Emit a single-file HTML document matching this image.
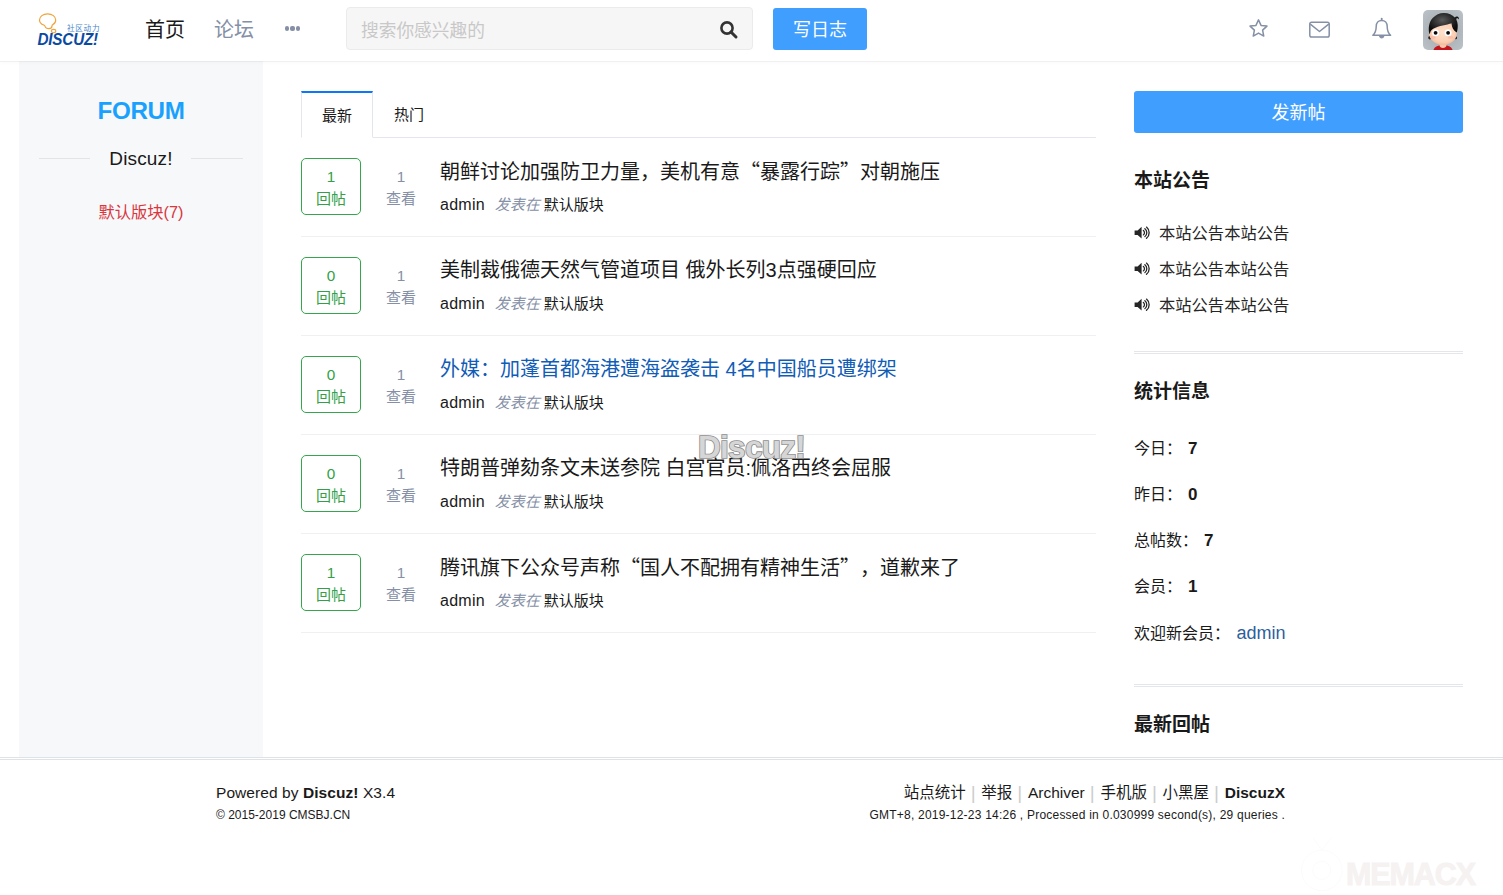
<!DOCTYPE html>
<html lang="zh-CN">
<head>
<meta charset="utf-8">
<title>Discuz! Forum</title>
<style>
*{box-sizing:border-box;margin:0;padding:0}
html,body{width:1503px;height:895px;overflow:hidden;background:#fff}
body{text-spacing-trim:space-all;font-family:"Liberation Sans","Noto Sans CJK SC",sans-serif;color:#1a1a1a;position:relative;font-size:15px}
a{color:inherit;text-decoration:none}
ul{list-style:none}
.abs{position:absolute}
/* header */
#hd{position:absolute;left:0;top:0;width:1503px;height:62px;z-index:2;background:linear-gradient(#fff,#fff) 0 0/100% 61px no-repeat;border-bottom:1px solid rgba(0,0,0,.06);box-shadow:0 1px 4px rgba(0,0,0,.025)}
#logo{position:absolute;left:36px;top:10px;width:68px;height:40px}
.nav{position:absolute;top:0;height:60px;line-height:60px;font-size:20px;white-space:nowrap}
#n1{left:145px;color:#1a1a1a}
#n2{left:214px;color:#8590a6}
#n3{left:284px;top:26px;width:17px;height:6px}
#n3 i{position:absolute;top:0;width:4.6px;height:4.6px;border-radius:2px;background:#8590a6}
#sch{position:absolute;left:346px;top:7px;width:407px;height:43px;background:#f6f6f6;border:1px solid #ebebeb;border-radius:4px}
#sch span{position:absolute;left:14px;top:3px;line-height:40px;font-size:17.7px;color:#c8c8c8;white-space:nowrap}
#sch svg{position:absolute;left:372px;top:12px}
#wbtn{position:absolute;left:773px;top:8px;width:94px;height:42px;background:#409eff;border-radius:3px;color:#fff;font-size:18px;line-height:45px;text-align:center}
.ico{position:absolute}
#ava{position:absolute;left:1423px;top:10px;width:40px;height:40px;border-radius:5px;overflow:hidden}
/* left */
#lf{position:absolute;left:19px;top:61px;width:244px;height:696px;background:#f7f8fa}
#lf h2{position:absolute;left:0;top:34px;width:244px;text-align:center;font-size:24.2px;line-height:32px;color:#19a1fd;font-weight:bold;letter-spacing:-.3px}
#lf .dz{position:absolute;left:0;top:86px;width:244px;text-align:center;letter-spacing:.15px;font-size:19px;line-height:24px;color:#1a1a1a}
#lf .ln{position:absolute;top:97px;height:1px;width:51px;background:#e3e4e6}
#lf .fm{position:absolute;left:0;top:139px;width:244px;text-align:center;font-size:16.3px;line-height:24px;color:#d9363e}
/* main */
#tabs{position:absolute;left:301px;top:91px;width:795px;height:47px;border-bottom:1px solid #e3e6ee}
#t1{position:absolute;left:0;top:0;width:72px;height:47px;border:1px solid #e3e6ee;border-top:2px solid #0d78f7;border-bottom:1px solid #fff;background:#fff;text-align:center;font-size:15px;line-height:46px;color:#1a1a1a}
#t2{position:absolute;left:72px;top:0;width:72px;height:46px;text-align:center;font-size:15px;line-height:48px;color:#1a1a1a}
.it{position:absolute;left:301px;width:795px;height:99px;border-bottom:1px solid #eef0f3}
.rb{position:absolute;left:0;top:20px;width:60px;height:57px;border:1px solid #35a64d;border-radius:5px;color:#339f48;text-align:center;font-size:15px}
.rb b,.vb b{display:block;font-weight:normal;line-height:18px;margin-top:9px;font-size:15.3px}
.rb s,.vb s{display:block;text-decoration:none;line-height:22px;margin-top:2px}
.vb{position:absolute;left:70px;top:20px;width:60px;height:57px;border:1px solid transparent;color:#8590a6;text-align:center;font-size:15px}
.tt{position:absolute;left:139px;top:18px;font-size:20px;line-height:30px;color:#1a1a1a;white-space:nowrap}
q{quotes:none;font-family:"Noto Sans CJK SC",sans-serif}q:before,q:after{content:""}
.tt.bl{color:#105cb6}
.mt{position:absolute;left:139px;top:55px;font-size:15px;line-height:24px;color:#1a1a1a;white-space:nowrap}
.mt .a{font-size:16px;letter-spacing:.25px}
.mt i{font-style:italic;color:#8590a6;margin:0 4px 0 10px}
/* right */
#pbtn{position:absolute;left:1134px;top:91px;width:329px;height:42px;background:#409eff;border-radius:3px;color:#fff;font-size:18px;line-height:44px;text-align:center}
.h3{position:absolute;left:1134px;font-size:19px;line-height:28px;font-weight:bold;color:#1a1a1a;white-space:nowrap}
.an{position:absolute;left:1134px;font-size:16.3px;line-height:24px;color:#262626;white-space:nowrap}
.an svg{position:absolute;left:-.3px;top:4.6px}
.an span{margin-left:25px}
.dl{position:absolute;left:1134px;width:329px;height:3px;border-top:1px solid #e3e6eb;border-bottom:1px solid #e3e6eb}
.st{position:absolute;left:1134px;font-size:16px;line-height:24px;color:#1a1a1a;white-space:nowrap}
.st b{font-size:17px;margin-left:6px}
.st a{font-size:18px;color:#2d5f9e;margin-left:6.5px}
/* footer */
#ft{position:absolute;left:0;top:757px;width:1503px;height:138px;background:#fff;border-top:3px double #dfe2e7}
#ft .l1{position:absolute;left:216px;top:22px;letter-spacing:.07px;font-size:15.5px;line-height:22px;color:#1a1a1a;white-space:nowrap}
#ft .l2{position:absolute;left:216px;top:47px;font-size:12px;line-height:16px;color:#1a1a1a;white-space:nowrap}
#ft .r1{position:absolute;right:218px;top:22px;font-size:15.5px;line-height:22px;color:#1a1a1a;white-space:nowrap}
#ft .r1 i{font-style:normal;color:#cdcdcd;margin:0 5.7px 0 5px;font-size:19px;line-height:10px;position:relative;top:1px}
#ft .r2{position:absolute;right:218px;top:47px;letter-spacing:.22px;font-size:12px;line-height:16px;color:#1a1a1a;white-space:nowrap}
#wm{position:absolute;left:698px;top:429px;font-size:31.5px;line-height:36px;font-weight:bold;color:#d6d6d6;-webkit-text-stroke:1.7px #8e8e8e;paint-order:stroke fill;letter-spacing:-.7px;white-space:nowrap}
#wm2{position:absolute;left:1346px;top:856px;font-size:30.5px;line-height:36px;font-weight:bold;color:#f6f2f2;-webkit-text-stroke:.9px #f6f2f2;letter-spacing:-1.1px;white-space:nowrap}
#wm3{position:absolute;left:1298px;top:836px}
</style>
</head>
<body>
<div id="hd">
  <svg id="logo" width="68" height="40" viewBox="36 10 68 40">
    <path d="M47.6 13.9c-4.6 0-8.1 2.6-8.1 6 0 2.3 1.700 4.100 4.300 5.100 0.700 0.300 1.100 0.700 1.300 1.400 0.500 1.500 1.900 2.300 3.600 2.300 1.900 0 3.300-1.100 3.300-2.700 0-0.600 0.300-1 0.900-1.400 1.800-1 2.800-2.700 2.800-4.700 0-3.400-3.500-6-8.100-6z" fill="none" stroke="#f0a33a" stroke-width="1.200"/>
    <ellipse cx="53.6" cy="31.100" rx="2.200" ry="1.700" fill="none" stroke="#f0a33a" stroke-width="1.100"/>
    <text x="67" y="31.400" font-family="'Liberation Sans','Noto Sans CJK SC',sans-serif" font-size="7.600" fill="#4a86cc" letter-spacing="0.700">社区动力</text>
    <text x="37.500" y="44.600" font-family="'Liberation Sans',sans-serif" font-size="16.300" font-weight="bold" font-style="italic" fill="#0b4aa2" letter-spacing="-0.200" textLength="60.500" lengthAdjust="spacingAndGlyphs">DISCUZ!</text>
  </svg>
  <a class="nav" id="n1">首页</a>
  <a class="nav" id="n2">论坛</a>
  <div class="abs" id="n3"><i style="left:.5px"></i><i style="left:6px"></i><i style="left:11.500px"></i></div>
  <div id="sch"><span>搜索你感兴趣的</span>
    <svg width="20" height="20" viewBox="0 0 20 20"><circle cx="8" cy="8" r="5.6" fill="none" stroke="#333" stroke-width="2.6"/><path d="M12 12l5 5" stroke="#333" stroke-width="3" stroke-linecap="round"/></svg>
  </div>
  <a id="wbtn">写日志</a>
  <svg class="ico" style="left:1247px;top:17px" width="23" height="23" viewBox="0 0 23 23"><path d="M11.500 2.900l2.550 5.500 5.900 0.700-4.350 4.050 1.150 5.900-5.250-2.950-5.250 2.950 1.150-5.900-4.350-4.050 5.900-0.700z" fill="none" stroke="#8590a6" stroke-width="1.500" stroke-linejoin="round"/></svg>
  <svg class="ico" style="left:1308px;top:20px" width="24" height="20" viewBox="0 0 24 20"><rect x="1.800" y="2.300" width="19.400" height="14.700" rx="1.800" fill="none" stroke="#8590a6" stroke-width="1.500"/><path d="M2.300 4.200l9.200 7.300 9.200-7.300" fill="none" stroke="#8590a6" stroke-width="1.500" stroke-linejoin="round"/></svg>
  <svg class="ico" style="left:1370px;top:17px" width="24" height="24" viewBox="0 0 24 24"><path d="M2.800 18.300c2.600-2.200 3.400-5.200 3.400-8.800 0-3.600 2.300-6.100 5.500-6.100s5.500 2.500 5.500 6.100c0 3.600 0.800 6.600 3.400 8.800z" fill="none" stroke="#8590a6" stroke-width="1.500" stroke-linejoin="round"/><path d="M11.700 3.200v-1.600" stroke="#8590a6" stroke-width="1.800" stroke-linecap="round"/><path d="M9.700 19.300a2.100 2.300 0 0 0 4 0z" fill="#8590a6" stroke="#8590a6" stroke-width="1.200"/></svg>
  <div id="ava"><svg width="40" height="40" viewBox="0 0 40 40">
    <defs>
      <radialGradient id="gbg" cx="50%" cy="50%" r="70%"><stop offset="0" stop-color="#9aa3a9"/><stop offset="0.550" stop-color="#aeb6bb"/><stop offset="1" stop-color="#bcc3c8"/></radialGradient>
      <radialGradient id="gsk" cx="50%" cy="45%" r="60%"><stop offset="0" stop-color="#ffe2cd"/><stop offset="0.700" stop-color="#fbd0b4"/><stop offset="1" stop-color="#eeb496"/></radialGradient>
      <radialGradient id="ghr" cx="45%" cy="35%" r="55%"><stop offset="0" stop-color="#5a5a5a"/><stop offset="0.600" stop-color="#2a2a2a"/><stop offset="1" stop-color="#0c0c0c"/></radialGradient>
    </defs>
    <rect width="40" height="40" fill="url(#gbg)"/>
    <path d="M10.500 40c0.800-3 3.500-4.700 9.500-4.700s8.700 1.700 9.500 4.700z" fill="#c4161c"/>
    <path d="M16.600 33h6.800v2.600c0 1.500-1.500 2.400-3.400 2.400s-3.400-0.900-3.400-2.400z" fill="#f6c7aa"/>
    <circle cx="6.900" cy="27.800" r="1.700" fill="#2a2020"/>
    <circle cx="32.600" cy="27.800" r="1.500" fill="#2a2020"/>
    <ellipse cx="20" cy="23.400" rx="13.800" ry="11.500" fill="url(#gsk)"/>
    <path d="M6.300 23.500c-1.300-5.500-0.300-11.500 3.400-15.500 3-3.300 7.300-5.200 11.300-5.100 4.500 0.100 8.400 1.700 10.800 4.500 0.900-0.900 2.100-1.300 3.300-0.500 0.800 0.600 1 1.600 0.500 2.500-0.300-0.800-1-1.400-1.800-1.100-0.500 0.200-0.700 0.700-0.500 1.300 1.700 3.400 2 8 0.600 12.600-0.400 0.300-0.800 0-0.900-0.300-2.600-1.500-4.300-4.400-4.400-8.600-4.900 1.700-12.500 2.300-18.400 5.500-1.900 1-3 2.700-3.200 4.700-0.300 0.300-0.600 0.200-0.700 0z" fill="url(#ghr)"/>
    <ellipse cx="10.200" cy="27.300" rx="2.800" ry="1.600" fill="#f8a9a0" opacity=".45"/>
    <ellipse cx="27.600" cy="27.300" rx="2.800" ry="1.600" fill="#f8a9a0" opacity=".45"/>
    <circle cx="12.600" cy="22.800" r="3.500" fill="#fff"/>
    <circle cx="25.100" cy="22.800" r="3.500" fill="#fff"/>
    <circle cx="12.600" cy="22.800" r="1.900" fill="#0a0a0a"/>
    <circle cx="25.100" cy="22.800" r="1.900" fill="#0a0a0a"/>
  </svg></div>
</div>

<div id="lf">
  <h2>FORUM</h2>
  <div class="ln" style="left:20px"></div>
  <div class="dz">Discuz!</div>
  <div class="ln" style="left:172px;width:52px"></div>
  <a class="fm">默认版块(7)</a>
</div>

<div id="tabs"><a id="t1">最新</a><a id="t2">热门</a></div>

<div class="it" style="top:138px"><div class="rb"><b>1</b><s>回帖</s></div><div class="vb"><b>1</b><s>查看</s></div><a class="tt">朝鲜讨论加强防卫力量，美机有意<q>“</q>暴露行踪<q>”</q>对朝施压</a><div class="mt"><span class="a">admin</span><i>发表在</i>默认版块</div></div>
<div class="it" style="top:237px"><div class="rb"><b>0</b><s>回帖</s></div><div class="vb"><b>1</b><s>查看</s></div><a class="tt">美制裁俄德天然气管道项目 俄外长列3点强硬回应</a><div class="mt"><span class="a">admin</span><i>发表在</i>默认版块</div></div>
<div class="it" style="top:336px"><div class="rb"><b>0</b><s>回帖</s></div><div class="vb"><b>1</b><s>查看</s></div><a class="tt bl">外媒：加蓬首都海港遭海盗袭击 4名中国船员遭绑架</a><div class="mt"><span class="a">admin</span><i>发表在</i>默认版块</div></div>
<div class="it" style="top:435px"><div class="rb"><b>0</b><s>回帖</s></div><div class="vb"><b>1</b><s>查看</s></div><a class="tt">特朗普弹劾条文未送参院 白宫官员:佩洛西终会屈服</a><div class="mt"><span class="a">admin</span><i>发表在</i>默认版块</div></div>
<div class="it" style="top:534px"><div class="rb"><b>1</b><s>回帖</s></div><div class="vb"><b>1</b><s>查看</s></div><a class="tt">腾讯旗下公众号声称<q>“</q>国人不配拥有精神生活<q>”</q>，道歉来了</a><div class="mt"><span class="a">admin</span><i>发表在</i>默认版块</div></div>

<a id="pbtn">发新帖</a>
<div class="h3" style="top:167px">本站公告</div>
<div class="an" style="top:221px"><svg width="17" height="13.400" viewBox="0 0 17 14" preserveAspectRatio="none"><path d="M0.600 4.600h3l4-3.700v12.200l-4-3.700h-3z" fill="#262626"/><path d="M9.400 4.700a3 3 0 0 1 0 4.600M10.900 2.900a5.400 5.400 0 0 1 0 8.200M12.500 1.100a7.900 7.900 0 0 1 0 11.800" fill="none" stroke="#262626" stroke-width="1.300" stroke-linecap="round"/></svg><span>本站公告本站公告</span></div>
<div class="an" style="top:257px"><svg width="17" height="13.400" viewBox="0 0 17 14" preserveAspectRatio="none"><path d="M0.600 4.600h3l4-3.700v12.200l-4-3.700h-3z" fill="#262626"/><path d="M9.400 4.700a3 3 0 0 1 0 4.600M10.900 2.900a5.400 5.400 0 0 1 0 8.200M12.500 1.100a7.900 7.900 0 0 1 0 11.800" fill="none" stroke="#262626" stroke-width="1.300" stroke-linecap="round"/></svg><span>本站公告本站公告</span></div>
<div class="an" style="top:293px"><svg width="17" height="13.400" viewBox="0 0 17 14" preserveAspectRatio="none"><path d="M0.600 4.600h3l4-3.700v12.200l-4-3.700h-3z" fill="#262626"/><path d="M9.400 4.700a3 3 0 0 1 0 4.600M10.900 2.900a5.400 5.400 0 0 1 0 8.200M12.500 1.100a7.900 7.900 0 0 1 0 11.800" fill="none" stroke="#262626" stroke-width="1.300" stroke-linecap="round"/></svg><span>本站公告本站公告</span></div>
<div class="dl" style="top:351px"></div>
<div class="h3" style="top:378px">统计信息</div>
<div class="st" style="top:437px">今日：<b>7</b></div>
<div class="st" style="top:483px">昨日：<b>0</b></div>
<div class="st" style="top:529px">总帖数：<b>7</b></div>
<div class="st" style="top:575px">会员：<b>1</b></div>
<div class="st" style="top:621px">欢迎新会员：<a>admin</a></div>
<div class="dl" style="top:684px"></div>
<div class="h3" style="top:711px">最新回帖</div>

<div id="ft">
  <div class="l1">Powered by <b>Discuz!</b> X3.4</div>
  <div class="l2">© 2015-2019 CMSBJ.CN</div>
  <div class="r1">站点统计<i>|</i>举报<i>|</i>Archiver<i>|</i>手机版<i>|</i>小黑屋<i>|</i><b>DiscuzX</b></div>
  <div class="r2">GMT+8, 2019-12-23 14:26 , Processed in 0.030999 second(s), 29 queries .</div>
</div>
<div id="wm">Discuz!</div>
<div id="wm2">MEMACX</div>
<svg id="wm3" width="48" height="58" viewBox="0 0 48 58"><circle cx="23.800" cy="34.400" r="20.300" fill="none" stroke="#fbfbfb" stroke-width="0.900"/><circle cx="23.800" cy="34.400" r="9" fill="none" stroke="#fbfbfb" stroke-width="0.900"/><path d="M15 2l9 12 10-13" fill="none" stroke="#fbfbfb" stroke-width="0.900"/></svg>
</body>
</html>
